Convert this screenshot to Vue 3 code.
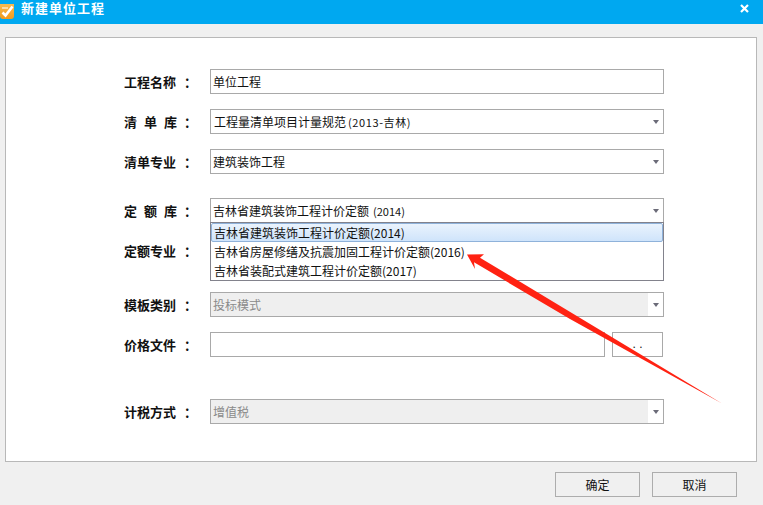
<script setup>
const rows = [
  { id: 'name', label: '工程名称', kind: 'input', value: '单位工程' },
  { id: 'lib', label: '清单库', spaced: true, kind: 'select', value: '工程量清单项目计量规范', suffix: '(2013-吉林)', wide: true, indent: true },
  { id: 'major', label: '清单专业', kind: 'select', value: '建筑装饰工程' },
  { id: 'quota', label: '定额库', spaced: true, kind: 'select', value: '吉林省建筑装饰工程计价定额', suffix: '(2014)', extra: 'gap-quota' },
  { id: 'qmajor', label: '定额专业', kind: 'select', value: '' },
  { id: 'tpl', label: '模板类别', kind: 'select', value: '投标模式', disabled: true, extra: 'gap-tpl' },
  { id: 'price', label: '价格文件', kind: 'file', value: '' },
  { id: 'tax', label: '计税方式', kind: 'select', value: '增值税', disabled: true, extra: 'gap-tax' },
]
const options = [
  '吉林省建筑装饰工程计价定额(2014)',
  '吉林省房屋修缮及抗震加固工程计价定额(2016)',
  '吉林省装配式建筑工程计价定额(2017)',
]
</script>

<template>
  <div class="dialog">
    <header class="titlebar">
      <svg class="logo" width="15" height="16" viewBox="0 0 15 16">
        <defs>
          <linearGradient id="logoFill" x1="0" y1="0" x2="0" y2="1">
            <stop offset="0" stop-color="#f9c25a" />
            <stop offset="1" stop-color="#f39a1c" />
          </linearGradient>
        </defs>
        <rect x="0" y="-3" width="14" height="18" rx="3" fill="url(#logoFill)" />
        <path d="M2.5 8.5 L5.5 11.5 L12.5 2.5" fill="none" stroke="#fff" stroke-width="2.6" />
        <path d="M2 4 H8" stroke="#fde7bd" stroke-width="1.6" />
      </svg>
      <span class="title">新建单位工程</span>
      <svg class="close" width="9" height="9" viewBox="0 0 9 9">
        <path d="M1 1 L8 8 M8 1 L1 8" stroke="#fff" stroke-width="2.2" />
      </svg>
    </header>

    <main class="panel">
      <div v-for="row in rows" :key="row.id" class="row" :class="row.extra">
        <div class="label">
          <span class="name" :class="{ spaced: row.spaced }">{{ row.label }}</span>
          <span class="colon">：</span>
        </div>

        <div v-if="row.kind === 'input'" class="field">
          <span class="value">{{ row.value }}</span>
        </div>

        <div v-else-if="row.kind === 'select'" class="field select" :class="{ disabled: row.disabled, indent: row.indent }">
          <span class="value">{{ row.value }}<span v-if="row.suffix" class="suffix" :class="{ wide: row.wide }">{{ row.suffix }}</span></span>
          <span class="drop"><i class="caret"></i></span>
        </div>

        <div v-else class="file">
          <div class="field grow"></div>
          <div class="browse">. .</div>
        </div>

        <ul v-if="row.id === 'quota'" class="options">
          <li v-for="(opt, i) in options" :key="opt" :class="{ active: i === 0 }">{{ opt }}</li>
        </ul>
      </div>
    </main>

    <footer class="footer">
      <button class="btn">确定</button>
      <button class="btn">取消</button>
    </footer>

    <svg class="arrow" width="763" height="505" viewBox="0 0 763 505">
      <path d="M467 254.5 L484 254.3 L480 257.7 L722 403.5 L570 319 L474 262.3 L475 269 Z" fill="#ff2212" />
    </svg>
  </div>
</template>

<style>
html, body { margin: 0; padding: 0; background: #f0f0f0; }
</style>

<style scoped>
.dialog {
  position: relative;
  width: 763px;
  height: 505px;
  overflow: hidden;
  background: #f0f0f0;
  font-family: "Noto Sans CJK SC", "Liberation Sans", sans-serif;
  color: #111;
}
.titlebar {
  height: 24px;
  background: #00a8f0;
  display: flex;
  align-items: center;
  color: #fff;
}
.logo { margin-right: 6px; flex: none; margin-top: -1px; }
.title { align-self: flex-start; font-size: 13px; font-weight: 700; letter-spacing: 1px; line-height: 13px; margin-top: 1px; }
.close { margin-left: auto; margin-right: 14px; margin-top: -8px; }
.panel {
  margin: 13px 6px 0 5px;
  height: 425px;
  box-sizing: border-box;
  border: 1px solid #b8b8b8;
  background: #fff;
  padding: 31px 0 0 118px;
  display: flex;
  flex-direction: column;
  gap: 15px;
}
.row { position: relative; display: flex; height: 25px; align-items: center; }
.gap-quota { margin-top: 9px; }
.gap-tpl { margin-top: 14px; }
.gap-tax { margin-top: 27px; }
.label { width: 86px; display: flex; font-size: 13px; font-weight: 700; line-height: 16px; }
.name { width: 60px; white-space: nowrap; }
.spaced { letter-spacing: 7px; }
.colon { width: 13px; }
.field {
  box-sizing: border-box;
  width: 454px;
  height: 25px;
  border: 1px solid #a9a9a9;
  background: #fff;
  display: flex;
  align-items: center;
  padding-left: 2px;
  font-size: 12px;
  line-height: 16px;
}
.indent { padding-left: 3px; }
.value { flex: 1; white-space: nowrap; }
.suffix { font-size: 11px; margin-left: 4px; }
.suffix.wide { margin-left: 2px; letter-spacing: 0.6px; }
.drop { width: 15px; height: 100%; background: #fff; display: flex; align-items: center; justify-content: center; flex: none; }
.caret { width: 0; height: 0; border: 3.5px solid transparent; border-top: 4px solid #6b6b78; border-bottom: 0; }
.disabled { background: #efefef; color: #8a8a8a; }
.file { display: flex; width: 453px; justify-content: space-between; }
.grow { width: 395px; }
.browse {
  box-sizing: border-box;
  width: 51px;
  height: 25px;
  border: 1px solid #a9a9a9;
  text-align: center;
  font: 12px/23px "Liberation Sans", sans-serif;
  color: #111;
}
.options {
  position: absolute;
  left: 86px;
  top: 24px;
  width: 454px;
  height: 59px;
  box-sizing: border-box;
  margin: 0;
  padding: 0;
  list-style: none;
  background: #fff;
  border: 1px solid #82828c;
  font-size: 12px;
  z-index: 2;
}
.options li { height: 19px; line-height: 19px; padding-left: 3px; white-space: nowrap; box-sizing: border-box; }
.options li.active {
  line-height: 17px;
  padding-left: 2px;
  border: 1px solid #8fb2da;
  border-radius: 2px;
  background: linear-gradient(#eaf3fd, #cfe4fb);
}
.footer {
  display: flex;
  justify-content: flex-end;
  gap: 12px;
  padding: 10px 26px 0 0;
}
.btn {
  box-sizing: border-box;
  width: 85px;
  height: 25px;
  border: 1px solid #adadad;
  background: #f0f0f0;
  padding: 0;
  font-family: inherit;
  font-size: 12px;
  color: #111;
}
.arrow { position: absolute; left: 0; top: 0; z-index: 3; pointer-events: none; }
</style>
